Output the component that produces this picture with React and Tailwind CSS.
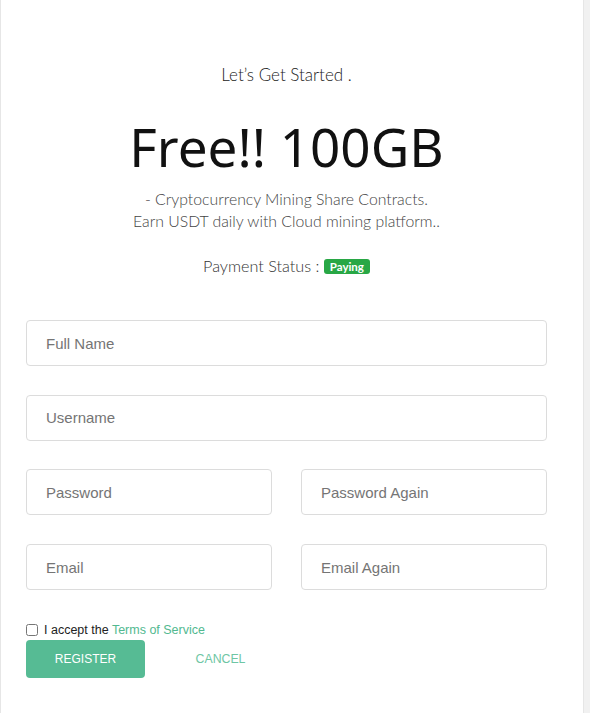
import React from 'react';

function Field({ placeholder, type = 'text' }) {
  return (
    <input
      type={type}
      placeholder={placeholder}
      className="block w-full h-[46px] rounded-[4px] border border-[#dcdcdc] bg-white px-[19px] text-[15px] text-[#333] placeholder:text-[#757575] outline-none"
      style={{ fontFamily: '"Liberation Sans", Arial, sans-serif' }}
    />
  );
}

export default function App() {
  return (
    <div className="flex min-h-[713px] bg-white">
      <div className="w-[584px] min-h-[713px] border-l border-r border-[#e6e6e6] bg-white">
        <div className="ml-[25px] w-[521px] pt-[64px]">
          <div className="text-center font-light" style={{ fontFamily: 'Lato, "Noto Sans", sans-serif' }}>
            <p className="text-[17px] leading-[22px] text-[#222]">Let’s Get Started .</p>
            <h1
              className="mt-[23px] text-[53px] font-normal leading-[76px] text-[#111]"
              style={{ fontFamily: '"Noto Sans", "Open Sans", sans-serif' }}
            >
              Free!! 100GB
            </h1>
            <p className="mt-[3px] text-[15.8px] leading-[22px] text-[#444]">
              - Cryptocurrency Mining Share Contracts.
              <br />
              Earn USDT daily with Cloud mining platform..
            </p>
            <p className="mt-[23px] text-[16.2px] leading-[22px] text-[#333]">
              Payment Status :{' '}
              <span className="inline-block rounded-[3px] bg-[#28a745] px-[6px] text-[11.5px] font-bold leading-[15px] text-white align-[1px]">
                Paying
              </span>
            </p>
          </div>

          <form className="mt-[43px] flex flex-col gap-[28.7px]" onSubmit={(e) => e.preventDefault()}>
            <Field placeholder="Full Name" />
            <Field placeholder="Username" />
            <div className="grid grid-cols-2 gap-[29px]">
              <Field placeholder="Password" type="password" />
              <Field placeholder="Password Again" type="password" />
            </div>
            <div className="grid grid-cols-2 gap-[29px]">
              <Field placeholder="Email" />
              <Field placeholder="Email Again" />
            </div>
          </form>

          <div
            className="mt-[32px] flex items-center gap-[6px] text-[12.5px] leading-[16px] text-[#222]"
            style={{ fontFamily: '"Liberation Sans", Arial, sans-serif' }}
          >
            <input type="checkbox" className="h-[12px] w-[12px] m-0" />
            <span>
              I accept the <a href="#" className="text-[#52b990]">Terms of Service</a>
            </span>
          </div>

          <div
            className="mt-[2px] flex gap-[16px]"
            style={{ fontFamily: '"Liberation Sans", Arial, sans-serif' }}
          >
            <button className="h-[38px] w-[119px] rounded-[4px] bg-[#56bb94] text-[12px] text-white">
              REGISTER
            </button>
            <button className="h-[38px] w-[119px] text-[12.3px] text-[#6ec6a4]">CANCEL</button>
          </div>
        </div>
      </div>
      <div className="flex-1 bg-[#f1f1f1]" />
    </div>
  );
}
